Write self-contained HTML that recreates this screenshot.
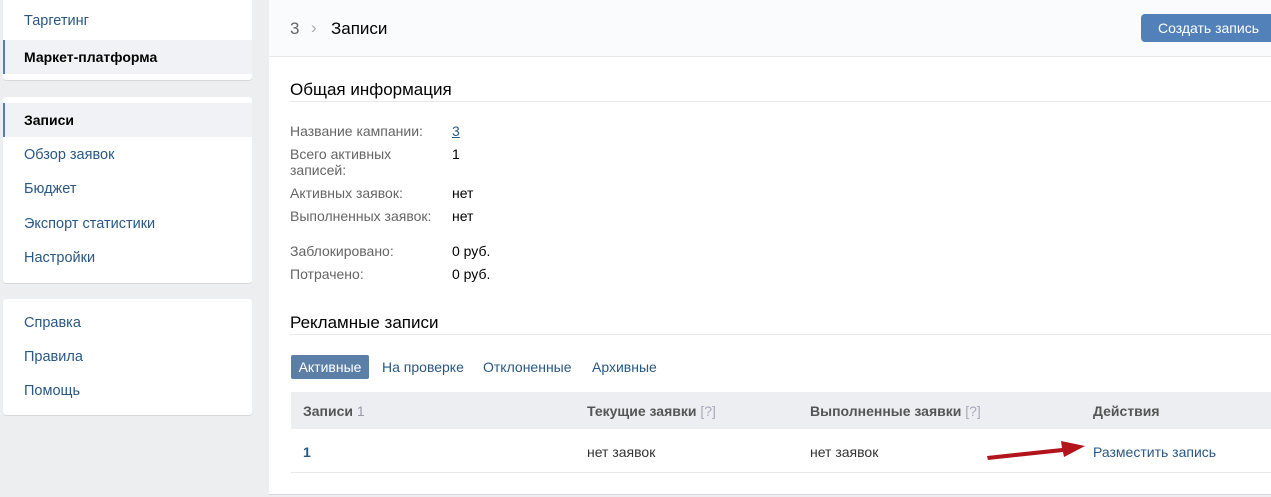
<!DOCTYPE html>
<html><head><meta charset="utf-8"><style>
*{margin:0;padding:0;box-sizing:border-box}
body{width:1271px;height:497px;background:#edeef0;font-family:"Liberation Sans","Noto Sans CJK SC",sans-serif;font-size:14px;color:#000;position:relative;overflow:hidden}
.card{position:absolute;left:3px;width:249px;background:#fff;border-radius:0 0 3px 3px;box-shadow:0 1px 0 #d7d8db}
.item{position:absolute;left:0;width:249px;height:34px;line-height:34px;padding-left:21px;color:#2a5885;font-size:14.5px}
.item.sel{background:#f0f2f5;color:#000;font-weight:bold;border-left:2px solid #5181b8;padding-left:19px;font-size:14px}
.main{position:absolute;left:269px;top:0;width:1002px;height:494px;background:#fff;box-shadow:0 1px 0 #d7d8db}
.hdr{position:absolute;left:0;top:0;width:1002px;height:57px;background:#fafbfc;border-bottom:1px solid #e7e8ec}
.t{position:absolute;white-space:nowrap}
.lbl{color:#656565;font-size:14px}
.h2{font-size:17px;color:#000}
.line{position:absolute;left:21px;right:0;height:1px;background:#e7e8ec}
</style></head><body>
<div class="card" style="top:0;height:80px">
<div class="item" style="top:4px">Таргетинг</div>
<div class="item sel" style="top:40px">Маркет-платформа</div>
</div>
<div class="card" style="top:97px;height:186px;border-radius:3px">
<div class="item sel" style="top:6px">Записи</div>
<div class="item" style="top:41px">Обзор заявок</div>
<div class="item" style="top:75px">Бюджет</div>
<div class="item" style="top:110px">Экспорт статистики</div>
<div class="item" style="top:144px">Настройки</div>
</div>
<div class="card" style="top:299px;height:116px;border-radius:3px">
<div class="item" style="top:7px">Справка</div>
<div class="item" style="top:41px">Правила</div>
<div class="item" style="top:75px">Помощь</div>
</div>
<div class="main">
<div class="hdr">
<div class="t" style="left:21px;top:19px;font-size:17px;color:#656565">3</div>
<div class="t" style="left:42px;top:18px;font-size:17px;color:#aaa">›</div>
<div class="t" style="left:62px;top:19px;font-size:17px">Записи</div>
<div style="position:absolute;left:872px;top:14px;width:135px;height:28px;background:#5181b8;border-radius:4px;color:#fff;font-size:14px;line-height:28px;padding-left:17px">Создать запись</div>
</div>
<div class="t h2" style="left:21px;top:80px">Общая информация</div>
<div class="line" style="top:101px"></div>
<div class="t lbl" style="left:21px;top:123px">Название кампании:</div>
<div class="t" style="left:183px;top:123px;color:#2a5885;text-decoration:underline">3</div>
<div class="t lbl" style="left:21px;top:146px;line-height:16px">Всего активных<br>записей:</div>
<div class="t" style="left:183px;top:146px">1</div>
<div class="t lbl" style="left:21px;top:185px">Активных заявок:</div>
<div class="t" style="left:183px;top:185px">нет</div>
<div class="t lbl" style="left:21px;top:208px">Выполненных заявок:</div>
<div class="t" style="left:183px;top:208px">нет</div>
<div class="t lbl" style="left:21px;top:243px">Заблокировано:</div>
<div class="t" style="left:183px;top:243px">0 руб.</div>
<div class="t lbl" style="left:21px;top:266px">Потрачено:</div>
<div class="t" style="left:183px;top:266px">0 руб.</div>
<div class="t h2" style="left:21px;top:313px">Рекламные записи</div>
<div class="line" style="top:334px"></div>
<div style="position:absolute;left:22px;top:355px;width:78px;height:24px;background:#5b7fa6;border-radius:2px;color:#fff;line-height:24px;text-align:center">Активные</div>
<div class="t" style="left:113px;top:359px;color:#2a5885">На проверке</div>
<div class="t" style="left:214px;top:359px;color:#2a5885">Отклоненные</div>
<div class="t" style="left:323px;top:359px;color:#2a5885">Архивные</div>
<div style="position:absolute;left:22px;top:392px;width:980px;height:37px;background:#eceef1"></div>
<div style="position:absolute;left:22px;top:429px;width:980px;height:44px;border-bottom:1px solid #e7e8ec"></div>
<div class="t" style="left:34px;top:403px;font-weight:bold;color:#555">Записи <span style="color:#99a;font-weight:normal">1</span></div>
<div class="t" style="left:318px;top:403px;font-weight:bold;color:#555">Текущие заявки <span style="color:#aab;font-weight:normal">[?]</span></div>
<div class="t" style="left:541px;top:403px;font-weight:bold;color:#555">Выполненные заявки <span style="color:#aab;font-weight:normal">[?]</span></div>
<div class="t" style="left:824px;top:403px;font-weight:bold;color:#555">Действия</div>
<div class="t" style="left:34px;top:444px;font-weight:bold;color:#2a5885">1</div>
<div class="t" style="left:318px;top:444px;color:#333">нет заявок</div>
<div class="t" style="left:541px;top:444px;color:#333">нет заявок</div>
<div class="t" style="left:824px;top:444px;color:#2a5885">Разместить запись</div>
<svg style="position:absolute;left:715px;top:436px" width="105" height="28"><path d="M3 20 L78 12 L77 5 L101 10 L80 21 L79 16 L4 24 Z" fill="#b3141b"/></svg>
</div>
</body></html>
